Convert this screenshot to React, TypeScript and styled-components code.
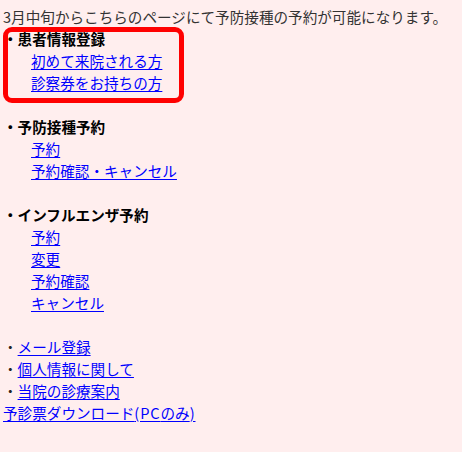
import React from "react";
import styled, { createGlobalStyle } from "styled-components";

const Global = createGlobalStyle`
  html, body {
    margin: 0;
    padding: 0;
    background: #ffeeee;
  }
  body {
    font-family: "Noto Sans CJK JP", "Noto Sans", sans-serif;
    font-size: 14.6px;
    line-height: 22px;
    color: #333333;
  }
`;

const Page = styled.div`
  position: relative;
  padding: 6px 3px 0 3px;
`;

const Line = styled.div`
  height: 22px;
  white-space: nowrap;
`;

const Spacer = styled.div`
  height: 22px;
`;

const Heading = styled.div`
  height: 22px;
  font-weight: bold;
  color: #000000;
  white-space: nowrap;
`;

const SubLine = styled.div`
  height: 22px;
  padding-left: 28px;
  white-space: nowrap;
`;

const Link = styled.a`
  color: #0000ff;
  text-decoration: underline;
  text-underline-offset: 2px;
`;

const Latin = styled.span`
  letter-spacing: 0.06em;
`;

const Bullet = styled.span`
  color: #222;
`;

const Highlight = styled.div`
  position: absolute;
  left: 3px;
  top: 27px;
  width: 181px;
  height: 76px;
  box-sizing: border-box;
  border: 5px solid #ff0000;
  border-radius: 9px;
  pointer-events: none;
`;

const sections = [
  { title: "患者情報登録", links: ["初めて来院される方", "診察券をお持ちの方"] },
  { title: "予防接種予約", links: ["予約", "予約確認・キャンセル"] },
  { title: "インフルエンザ予約", links: ["予約", "変更", "予約確認", "キャンセル"] },
];

export default function App() {
  return (
    <>
      <Global />
      <Page>
        <Line>3月中旬からこちらのページにて予防接種の予約が可能になります。</Line>
        {sections.map((s, i) => (
          <React.Fragment key={s.title}>
            {i > 0 && <Spacer />}
            <Heading>・{s.title}</Heading>
            {s.links.map((l) => (
              <SubLine key={l}>
                <Link href="#">{l}</Link>
              </SubLine>
            ))}
          </React.Fragment>
        ))}
        <Spacer />
        {["メール登録", "個人情報に関して", "当院の診療案内"].map((l) => (
          <Line key={l}>
            <Bullet>・</Bullet>
            <Link href="#">{l}</Link>
          </Line>
        ))}
        <Line>
          <Link href="#">
            予診票ダウンロード<Latin>(PC</Latin>のみ<Latin>)</Latin>
          </Link>
        </Line>
        <Highlight />
      </Page>
    </>
  );
}
